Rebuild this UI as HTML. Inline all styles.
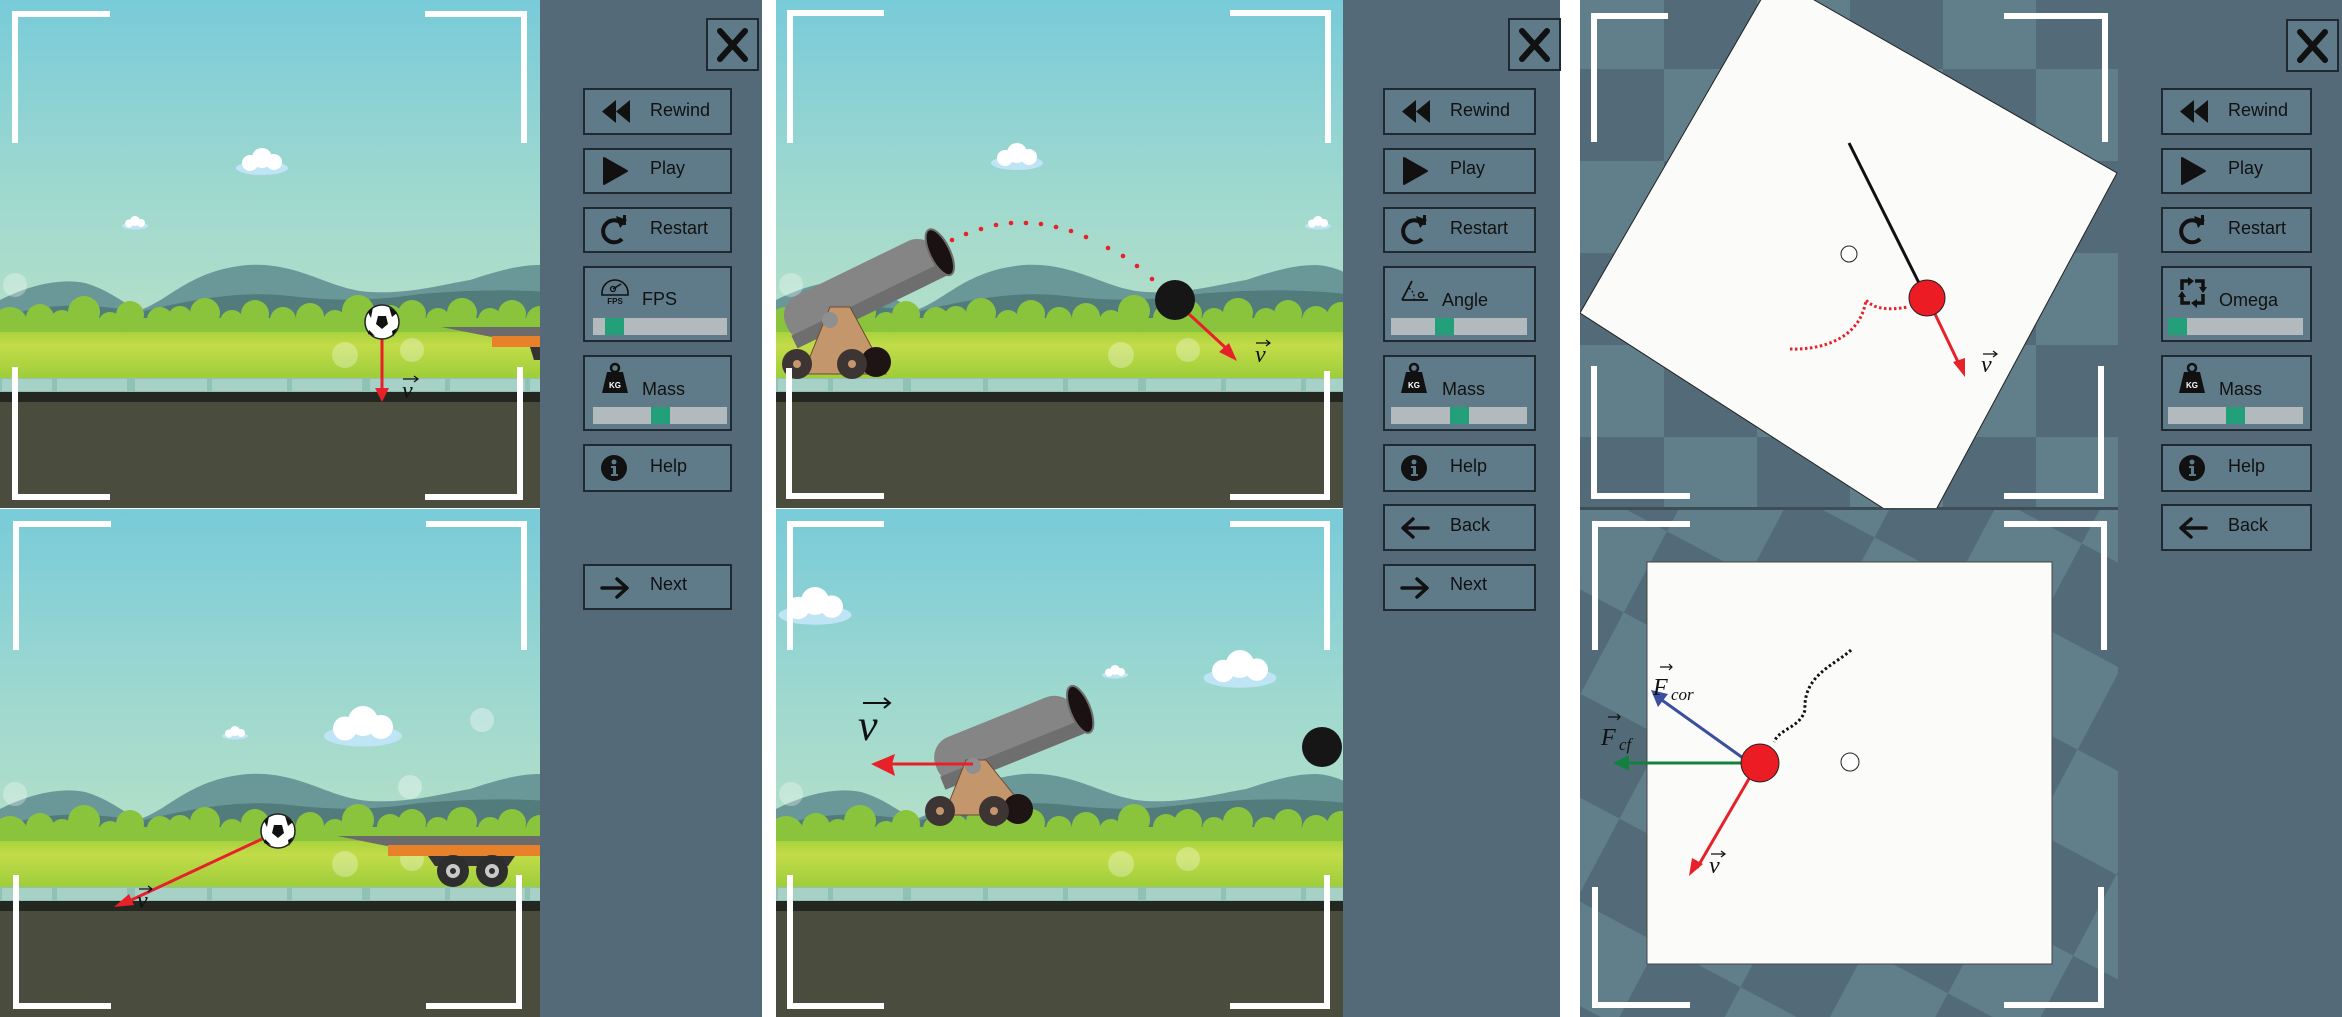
<!DOCTYPE html>
<html><head><meta charset="utf-8"><style>
html,body{margin:0;padding:0;background:#fff;}
svg{display:block;}
</style></head><body>
<svg width="2342" height="1017" viewBox="0 0 2342 1017" xmlns="http://www.w3.org/2000/svg" font-family="Liberation Sans, sans-serif">
<defs>
<linearGradient id="sky" x1="0" y1="0" x2="0" y2="1">
<stop offset="0" stop-color="#78cbd9"/><stop offset="0.55" stop-color="#9ed8cf"/><stop offset="1" stop-color="#b6e0c8"/>
</linearGradient>
<linearGradient id="grass" x1="0" y1="0" x2="0" y2="1">
<stop offset="0" stop-color="#a9d23d"/><stop offset="0.3" stop-color="#c2dc48"/><stop offset="1" stop-color="#9fcd3b"/>
</linearGradient>
<g id="scene">
<rect x="0" y="0" width="580" height="340" fill="url(#sky)"/>
<path d="M0,300 C30,285 60,278 85,283 C110,290 125,305 140,310 C170,300 190,270 248,265 C300,262 330,290 370,292 C410,294 440,285 470,280 C500,270 520,265 540,265 C560,266 575,275 580,280 L580,340 L0,340 Z" fill="#6a9899"/>
<path d="M0,318 C50,300 100,305 140,312 C190,300 240,290 290,296 C340,302 380,300 420,294 C470,290 520,288 580,295 L580,340 L0,340 Z" fill="#527b7b"/>
<g fill="#8ac43c">
<circle cx="10" cy="325" r="18"/><circle cx="40" cy="318" r="14"/><circle cx="62" cy="322" r="12"/><circle cx="84" cy="312" r="16"/><circle cx="110" cy="324" r="12"/><circle cx="130" cy="315" r="14"/><circle cx="160" cy="320" r="13"/><circle cx="180" cy="318" r="12"/><circle cx="205" cy="313" r="15"/><circle cx="232" cy="322" r="12"/><circle cx="255" cy="314" r="14"/><circle cx="283" cy="320" r="13"/><circle cx="310" cy="317" r="14"/><circle cx="335" cy="322" r="12"/><circle cx="358" cy="311" r="16"/><circle cx="390" cy="318" r="13"/><circle cx="412" cy="314" r="14"/><circle cx="438" cy="320" r="12"/><circle cx="462" cy="313" r="15"/><circle cx="490" cy="320" r="12"/><circle cx="512" cy="314" r="14"/><circle cx="540" cy="320" r="14"/><circle cx="565" cy="316" r="14"/>
<rect x="0" y="318" width="580" height="16"/>
</g>
<rect x="0" y="332" width="580" height="46" fill="url(#grass)"/>
<g fill="#ffffff" opacity="0.3"><circle cx="15" cy="285" r="12"/><circle cx="345" cy="355" r="13"/><circle cx="412" cy="350" r="12"/></g>
<rect x="0" y="378" width="580" height="15" fill="#8fc2b5"/>
<g fill="#a7d1c6"><rect x="2" y="379" width="50" height="12"/><rect x="57" y="379" width="70" height="12"/><rect x="135" y="379" width="72" height="12"/><rect x="212" y="379" width="75" height="12"/><rect x="292" y="379" width="70" height="12"/><rect x="370" y="379" width="75" height="12"/><rect x="450" y="379" width="75" height="12"/><rect x="530" y="379" width="50" height="12"/></g>
<rect x="0" y="392" width="580" height="10" fill="#23271f"/>
<rect x="0" y="402" width="580" height="120" fill="#4a4c3e"/>
</g>
<g id="cloud"><ellipse cx="0" cy="0" rx="26" ry="7" fill="#bfe4f5"/><circle cx="-12" cy="-5" r="8" fill="#fff"/><circle cx="0" cy="-10" r="10" fill="#fff"/><circle cx="12" cy="-6" r="8" fill="#fff"/></g>
<pattern id="chk" x="-10" y="-23" width="186" height="184" patternUnits="userSpaceOnUse">
<rect width="186" height="184" fill="#617e8b"/><rect width="93" height="92" fill="#536b79"/><rect x="93" y="92" width="93" height="92" fill="#536b79"/>
</pattern>
<pattern id="chk2" x="0" y="0" width="186" height="184" patternUnits="userSpaceOnUse" patternTransform="rotate(28 1850 760)">
<rect width="186" height="184" fill="#617e8b"/><rect width="93" height="92" fill="#536b79"/><rect x="93" y="92" width="93" height="92" fill="#536b79"/>
</pattern>
<clipPath id="c1t"><rect x="0" y="0" width="540" height="508"/></clipPath>
<clipPath id="c1b"><rect x="0" y="509" width="540" height="508"/></clipPath>
<clipPath id="c2t"><rect x="776" y="0" width="567" height="508"/></clipPath>
<clipPath id="c2b"><rect x="776" y="509" width="567" height="508"/></clipPath>
<clipPath id="c3t"><rect x="1580" y="0" width="538" height="508"/></clipPath>
<g id="i-rew"><path d="M15,0 L1,11.5 L15,23 Z M29,0 L15,11.5 L29,23 Z" fill="#111"/></g>
<g id="i-play"><path d="M1,0 L24,13 L1,26 Z" fill="#111" stroke="#111" stroke-width="2" stroke-linejoin="round"/></g>
<g id="i-rst"><path d="M20,5 A11,11 0 1 0 22,22" fill="none" stroke="#111" stroke-width="4"/><path d="M16,-1 L27,3 L20,11 Z M23,-2 L26,-2 L26,8 L23,8 Z" fill="#111"/></g>
<g id="i-help"><circle cx="13" cy="13" r="13" fill="#111"/><circle cx="13" cy="7" r="2.5" fill="#5f7b8a"/><path d="M10,11 L15,11 L15,19 L17,19 L17,21 L10,21 L10,19 L12,19 L12,13 L10,13 Z" fill="#5f7b8a"/></g>
<g id="i-back"><path d="M28,11 L4,11 M13,2 L3,11 L13,20" fill="none" stroke="#111" stroke-width="3.5" stroke-linecap="round" stroke-linejoin="round"/></g>
<g id="i-next"><path d="M2,11 L26,11 M17,2 L27,11 L17,20" fill="none" stroke="#111" stroke-width="3.5" stroke-linecap="round" stroke-linejoin="round"/></g>
<g id="i-mass"><circle cx="14" cy="3" r="4" fill="none" stroke="#111" stroke-width="2.5"/><path d="M6,7 L22,7 L27,28 L1,28 Z" fill="#111"/><text x="14" y="23" font-size="8" font-weight="bold" fill="#fff" text-anchor="middle">KG</text></g>
<g id="i-fps"><path d="M1,18 A13,13 0 0 1 27,18 L27,20 L1,20 Z" fill="none" stroke="#111" stroke-width="1.6"/><path d="M12,14 L20,9" stroke="#111" stroke-width="1.5"/><circle cx="12" cy="14" r="2.5" fill="none" stroke="#111" stroke-width="1.3"/><text x="14" y="29" font-size="8" font-weight="bold" fill="#111" text-anchor="middle">FPS</text></g>
<g id="i-angle"><path d="M2,25 L28,25 M2,25 L12,6" fill="none" stroke="#111" stroke-width="1.8"/><path d="M9,13 A12,12 0 0 1 14,25" fill="none" stroke="#111" stroke-width="1.3" stroke-dasharray="2 2"/><circle cx="21" cy="20" r="2.5" fill="none" stroke="#111" stroke-width="1.5"/></g>
<g id="i-omega"><path d="M4,12 L4,3 L13,3 M17,3 L25,3 L25,11 M25,16 L25,25 L16,25 M12,25 L4,25 L4,17" fill="none" stroke="#111" stroke-width="3.5"/><path d="M10,-1 L16,3 L10,8Z M29,9 L25,15 L21,9Z M19,21 L13,25 L19,30Z M0,19 L4,13 L8,19Z" fill="#111"/></g>
<g id="xbtn"><rect x="0" y="0" width="51" height="51" fill="#5f7b8a" stroke="#1f2a30" stroke-width="2"/><path d="M13,12 L38,40 M38,12 L13,40" stroke="#111" stroke-width="6" stroke-linecap="round"/></g>
</defs>

<rect width="2342" height="1017" fill="#fff"/>

<!-- PANEL 1 -->
<g clip-path="url(#c1t)"><use href="#scene"/>
<use href="#cloud" transform="translate(262,168)"/><use href="#cloud" transform="translate(135,226) scale(0.5)"/>
<path d="M441,327 L540,327 L540,337 L492,337 Z" fill="#6b6b6b"/><rect x="492" y="336" width="50" height="11" fill="#e8822a"/><path d="M530,347 L540,347 L540,360 L534,360Z" fill="#333"/>
<line x1="382" y1="339" x2="382" y2="392" stroke="#e8202a" stroke-width="3"/><path d="M375,388 L389,388 L382,402 Z" fill="#e8202a"/>
<circle cx="382" cy="322" r="17" fill="#fff" stroke="#222" stroke-width="1.5"/><path d="M378,316 L386,316 L388,324 L382,329 L376,324Z" fill="#111"/><path d="M389,307 L397,313 L392,317Z M368,312 L373,307 L371,318Z M369,330 L375,336 L368,334Z M392,331 L397,328 L393,337Z" fill="#111"/>
<text x="402" y="398" font-family="Liberation Serif, serif" font-style="italic" font-size="24" fill="#111">v</text><path d="M403,379 L418,379 M414,376 L418,379 L414,382" stroke="#111" stroke-width="1.2" fill="none"/>
</g>
<g clip-path="url(#c1b)"><use href="#scene" y="509"/>
<use href="#cloud" transform="translate(363,736) scale(1.5)"/><use href="#cloud" transform="translate(235,736) scale(0.5)"/>
<g fill="#fff" opacity="0.35"><circle cx="482" cy="720" r="12"/><circle cx="410" cy="787" r="12"/></g>
<path d="M337,836 L540,836 L540,846 L387,846 Z" fill="#6b6b6b"/><rect x="388" y="845" width="152" height="11" fill="#e8822a"/>
<path d="M428,856 L515,856 L508,866 L435,866 Z" fill="#333"/>
<circle cx="453" cy="871" r="16" fill="#2e2e2e"/><circle cx="453" cy="871" r="7" fill="#c9c9c9"/><circle cx="453" cy="871" r="3" fill="#2e2e2e"/>
<circle cx="492" cy="871" r="16" fill="#2e2e2e"/><circle cx="492" cy="871" r="7" fill="#c9c9c9"/><circle cx="492" cy="871" r="3" fill="#2e2e2e"/>
<line x1="262" y1="839" x2="127" y2="902" stroke="#e8202a" stroke-width="3"/><path d="M114,907 L129,894 L134,905 Z" fill="#e8202a"/>
<circle cx="278" cy="831" r="17" fill="#fff" stroke="#222" stroke-width="1.5"/><path d="M274,825 L282,825 L284,833 L278,838 L272,833Z" fill="#111"/><path d="M285,816 L293,822 L288,826Z M264,821 L269,816 L267,827Z M265,839 L271,845 L264,843Z M288,840 L293,837 L289,846Z" fill="#111"/>
<text x="137" y="908" font-family="Liberation Serif, serif" font-style="italic" font-size="24" fill="#111">v</text><path d="M139,889 L152,889 M148,886 L152,889 L148,892" stroke="#111" stroke-width="1.2" fill="none"/>
</g>
<g fill="none" stroke="#fff" stroke-width="6">
<path d="M110,14 L15,14 L15,143"/><path d="M425,14 L524,14 L524,143"/><path d="M15,367 L15,497 L110,497"/><path d="M520,367 L520,497 L425,497"/>
<path d="M111,524 L16,524 L16,650"/><path d="M426,524 L524,524 L524,650"/><path d="M16,875 L16,1006 L111,1006"/><path d="M519,875 L519,1006 L426,1006"/>
</g>

<rect x="540" y="0" width="222" height="1017" fill="#546a78"/>
<use href="#xbtn" x="707" y="19"/>
<g transform="translate(584,89)"><rect width="147" height="45" fill="#5f7b8a" stroke="#1f2a30" stroke-width="2"/><use href="#i-rew" x="17" y="11"/><text x="66" y="27" font-size="18" fill="#111">Rewind</text></g>
<g transform="translate(584,149)"><rect width="147" height="44" fill="#5f7b8a" stroke="#1f2a30" stroke-width="2"/><use href="#i-play" x="19" y="9"/><text x="66" y="25" font-size="18" fill="#111">Play</text></g>
<g transform="translate(584,208)"><rect width="147" height="44" fill="#5f7b8a" stroke="#1f2a30" stroke-width="2"/><use href="#i-rst" x="16" y="9"/><text x="66" y="26" font-size="18" fill="#111">Restart</text></g>
<g transform="translate(584,267)"><rect width="147" height="74" fill="#5f7b8a" stroke="#1f2a30" stroke-width="2"/><use href="#i-fps" x="17" y="8"/><text x="58" y="38" font-size="18" fill="#111">FPS</text><rect x="9" y="51" width="134" height="17" fill="#b3babd"/><rect x="21" y="51" width="19" height="17" fill="#23a07a"/></g>
<g transform="translate(584,356)"><rect width="147" height="74" fill="#5f7b8a" stroke="#1f2a30" stroke-width="2"/><use href="#i-mass" x="17" y="9"/><text x="58" y="39" font-size="18" fill="#111">Mass</text><rect x="9" y="51" width="134" height="17" fill="#b3babd"/><rect x="67" y="51" width="19" height="17" fill="#23a07a"/></g>
<g transform="translate(584,445)"><rect width="147" height="46" fill="#5f7b8a" stroke="#1f2a30" stroke-width="2"/><use href="#i-help" x="17" y="10"/><text x="66" y="27" font-size="18" fill="#111">Help</text></g>
<g transform="translate(584,565)"><rect width="147" height="44" fill="#5f7b8a" stroke="#1f2a30" stroke-width="2"/><use href="#i-next" x="16" y="12"/><text x="66" y="25" font-size="18" fill="#111">Next</text></g>

<!-- PANEL 2 -->
<g clip-path="url(#c2t)"><use href="#scene" x="776"/>
<use href="#cloud" transform="translate(1017,163)"/><use href="#cloud" transform="translate(1318,226) scale(0.5)"/>
<g fill="#e8202a"><circle cx="952" cy="240" r="2.3"/><circle cx="966" cy="234" r="2.3"/><circle cx="981" cy="229" r="2.3"/><circle cx="996" cy="225" r="2.3"/><circle cx="1011" cy="223" r="2.3"/><circle cx="1026" cy="223" r="2.3"/><circle cx="1041" cy="224" r="2.3"/><circle cx="1056" cy="227" r="2.3"/><circle cx="1071" cy="231" r="2.3"/><circle cx="1086" cy="237" r="2.3"/><circle cx="1108" cy="248" r="2.3"/><circle cx="1123" cy="256" r="2.3"/><circle cx="1137" cy="266" r="2.3"/><circle cx="1152" cy="279" r="2.3"/></g>
<g transform="translate(805,318) rotate(-26)"><rect x="-20" y="-24" width="168" height="48" rx="22" fill="#858585"/><rect x="-20" y="10" width="168" height="14" fill="#6e6e6e"/><ellipse cx="150" cy="0" rx="10" ry="25" fill="#1a1212" stroke="#6e6e6e" stroke-width="2"/></g>
<path d="M803,374 L830,307 L850,307 L886,374 Z" fill="#c4966c" stroke="#6b4b32" stroke-width="1"/>
<circle cx="830" cy="320" r="8" fill="#8f8f8f"/>
<circle cx="876" cy="362" r="15" fill="#1e1414"/><circle cx="797" cy="364" r="15" fill="#3d3533"/><circle cx="797" cy="364" r="4" fill="#c4966c"/><circle cx="852" cy="364" r="15" fill="#3d3533"/><circle cx="852" cy="364" r="4" fill="#c4966c"/>
<circle cx="1175" cy="300" r="20" fill="#161616"/>
<line x1="1189" y1="314" x2="1228" y2="350" stroke="#e8202a" stroke-width="3"/><path d="M1237,361 L1219,352 L1229,343 Z" fill="#e8202a"/>
<text x="1255" y="362" font-family="Liberation Serif, serif" font-style="italic" font-size="24" fill="#111">v</text><path d="M1256,343 L1270,343 M1266,340 L1270,343 L1266,346" stroke="#111" stroke-width="1.2" fill="none"/>
</g>
<g clip-path="url(#c2b)"><use href="#scene" x="776" y="509"/>
<use href="#cloud" transform="translate(815,615) scale(1.4)"/><use href="#cloud" transform="translate(1240,678) scale(1.4)"/><use href="#cloud" transform="translate(1115,675) scale(0.5)"/>
<g transform="translate(955,760) rotate(-22)"><rect x="-20" y="-24" width="150" height="48" rx="22" fill="#858585"/><rect x="-20" y="10" width="150" height="14" fill="#6e6e6e"/><ellipse cx="135" cy="0" rx="10" ry="25" fill="#1a1212" stroke="#6e6e6e" stroke-width="2"/></g>
<path d="M944,815 L966,760 L986,760 L1030,815 Z" fill="#c4966c" stroke="#6b4b32" stroke-width="1"/>
<circle cx="973" cy="766" r="8" fill="#8f8f8f"/>
<circle cx="1018" cy="809" r="15" fill="#1e1414"/><circle cx="940" cy="811" r="15" fill="#3d3533"/><circle cx="940" cy="811" r="4" fill="#c4966c"/><circle cx="994" cy="811" r="15" fill="#3d3533"/><circle cx="994" cy="811" r="4" fill="#c4966c"/>
<line x1="973" y1="764" x2="890" y2="764" stroke="#e8202a" stroke-width="3"/><path d="M871,764 L895,754 L892,764 L895,776 Z" fill="#e8202a"/>
<text x="858" y="740" font-family="Liberation Serif, serif" font-style="italic" font-size="44" fill="#111">v</text><path d="M863,703 L890,703 M884,698 L890,703 L884,708" stroke="#111" stroke-width="2" fill="none"/>
<circle cx="1322" cy="747" r="20" fill="#161616"/>
</g>
<g fill="none" stroke="#fff" stroke-width="6">
<path d="M884,13 L790,13 L790,143"/><path d="M1230,13 L1328,13 L1328,143"/><path d="M789,368 L789,496 L884,496"/><path d="M1327,371 L1327,497 L1230,497"/>
<path d="M884,524 L790,524 L790,650"/><path d="M1230,524 L1327,524 L1327,650"/><path d="M790,875 L790,1006 L884,1006"/><path d="M1327,875 L1327,1006 L1230,1006"/>
</g>

<rect x="1343" y="0" width="217" height="1017" fill="#546a78"/>
<use href="#xbtn" x="1509" y="19"/>
<g transform="translate(1384,89)"><rect width="151" height="45" fill="#5f7b8a" stroke="#1f2a30" stroke-width="2"/><use href="#i-rew" x="17" y="11"/><text x="66" y="27" font-size="18" fill="#111">Rewind</text></g>
<g transform="translate(1384,149)"><rect width="151" height="44" fill="#5f7b8a" stroke="#1f2a30" stroke-width="2"/><use href="#i-play" x="19" y="9"/><text x="66" y="25" font-size="18" fill="#111">Play</text></g>
<g transform="translate(1384,208)"><rect width="151" height="44" fill="#5f7b8a" stroke="#1f2a30" stroke-width="2"/><use href="#i-rst" x="16" y="9"/><text x="66" y="26" font-size="18" fill="#111">Restart</text></g>
<g transform="translate(1384,267)"><rect width="151" height="74" fill="#5f7b8a" stroke="#1f2a30" stroke-width="2"/><use href="#i-angle" x="16" y="8"/><text x="58" y="39" font-size="18" fill="#111">Angle</text><rect x="7" y="51" width="136" height="17" fill="#b3babd"/><rect x="51" y="51" width="19" height="17" fill="#23a07a"/></g>
<g transform="translate(1384,356)"><rect width="151" height="74" fill="#5f7b8a" stroke="#1f2a30" stroke-width="2"/><use href="#i-mass" x="16" y="9"/><text x="58" y="39" font-size="18" fill="#111">Mass</text><rect x="7" y="51" width="136" height="17" fill="#b3babd"/><rect x="66" y="51" width="19" height="17" fill="#23a07a"/></g>
<g transform="translate(1384,445)"><rect width="151" height="46" fill="#5f7b8a" stroke="#1f2a30" stroke-width="2"/><use href="#i-help" x="17" y="10"/><text x="66" y="27" font-size="18" fill="#111">Help</text></g>
<g transform="translate(1384,505)"><rect width="151" height="45" fill="#5f7b8a" stroke="#1f2a30" stroke-width="2"/><use href="#i-back" x="16" y="12"/><text x="66" y="26" font-size="18" fill="#111">Back</text></g>
<g transform="translate(1384,565)"><rect width="151" height="45" fill="#5f7b8a" stroke="#1f2a30" stroke-width="2"/><use href="#i-next" x="16" y="12"/><text x="66" y="25" font-size="18" fill="#111">Next</text></g>

<!-- PANEL 3 -->
<rect x="1580" y="0" width="538" height="508" fill="url(#chk)"/>
<rect x="1580" y="509" width="538" height="508" fill="url(#chk2)"/>
<rect x="1580" y="507" width="538" height="3" fill="#3d4e57"/>
<g clip-path="url(#c3t)">
<path d="M1774,-23 L2117,173 L1923,534 L1580,313 Z" fill="#fbfbf9" stroke="#222" stroke-width="1"/>
<line x1="1849" y1="143" x2="1920" y2="285" stroke="#111" stroke-width="3"/>
<circle cx="1849" cy="254" r="8" fill="#fff" stroke="#222" stroke-width="1"/>
<path d="M1790,349 C1820,350 1860,340 1866,300 C1875,310 1890,310 1908,307" fill="none" stroke="#e8202a" stroke-width="3" stroke-dasharray="2.5 2.5"/>
<line x1="1935" y1="314" x2="1959" y2="364" stroke="#e8202a" stroke-width="3"/><path d="M1965,377 L1953,362 L1965,358 Z" fill="#e8202a"/>
<circle cx="1927" cy="298" r="18" fill="#ec1c24" stroke="#222" stroke-width="1"/>
<text x="1981" y="372" font-family="Liberation Serif, serif" font-style="italic" font-size="24" fill="#111">v</text><path d="M1983,354 L1997,354 M1993,351 L1997,354 L1993,357" stroke="#111" stroke-width="1.2" fill="none"/>
</g>
<rect x="1647" y="562" width="405" height="402" fill="#fbfbf9" stroke="#444" stroke-width="1"/>
<path d="M1851,650 C1835,665 1803,675 1805,710 C1800,728 1780,728 1774,742" fill="none" stroke="#111" stroke-width="3" stroke-dasharray="2.5 2.5"/>
<line x1="1743" y1="758" x2="1659" y2="698" stroke="#3a4fa0" stroke-width="3"/><path d="M1651,690 L1668,694 L1658,707 Z" fill="#3a4fa0"/>
<line x1="1742" y1="763" x2="1625" y2="763" stroke="#138040" stroke-width="3"/><path d="M1613,763 L1629,755 L1629,771 Z" fill="#138040"/>
<line x1="1750" y1="777" x2="1697" y2="868" stroke="#e8202a" stroke-width="3"/><path d="M1689,876 L1692,858 L1703,864 Z" fill="#e8202a"/>
<circle cx="1760" cy="763" r="19" fill="#ec1c24" stroke="#222" stroke-width="1"/>
<circle cx="1850" cy="762" r="9" fill="#fff" stroke="#222" stroke-width="1"/>
<text x="1653" y="695" font-family="Liberation Serif, serif" font-style="italic" font-size="24" fill="#111">F</text><path d="M1660,667 L1672,667 M1669,664 L1672,667 L1669,670" stroke="#111" stroke-width="1.2" fill="none"/><text x="1671" y="700" font-family="Liberation Serif, serif" font-style="italic" font-size="17" fill="#111">cor</text>
<text x="1601" y="745" font-family="Liberation Serif, serif" font-style="italic" font-size="24" fill="#111">F</text><path d="M1608,717 L1620,717 M1617,714 L1620,717 L1617,720" stroke="#111" stroke-width="1.2" fill="none"/><text x="1619" y="750" font-family="Liberation Serif, serif" font-style="italic" font-size="17" fill="#111">cf</text>
<text x="1709" y="873" font-family="Liberation Serif, serif" font-style="italic" font-size="24" fill="#111">v</text><path d="M1711,854 L1725,854 M1721,851 L1725,854 L1721,857" stroke="#111" stroke-width="1.2" fill="none"/>
<g fill="none" stroke="#fff" stroke-width="6">
<path d="M1668,16 L1594,16 L1594,142"/><path d="M2004,16 L2105,16 L2105,142"/><path d="M1594,366 L1594,496 L1690,496"/><path d="M2101,366 L2101,496 L2004,496"/>
<path d="M1690,524 L1595,524 L1595,650"/><path d="M2004,524 L2104,524 L2104,650"/><path d="M1595,887 L1595,1005 L1690,1005"/><path d="M2101,887 L2101,1005 L2004,1005"/>
</g>

<rect x="2118" y="0" width="224" height="1017" fill="#546a78"/>
<use href="#xbtn" x="2287" y="20"/>
<g transform="translate(2162,89)"><rect width="149" height="45" fill="#5f7b8a" stroke="#1f2a30" stroke-width="2"/><use href="#i-rew" x="17" y="11"/><text x="66" y="27" font-size="18" fill="#111">Rewind</text></g>
<g transform="translate(2162,149)"><rect width="149" height="44" fill="#5f7b8a" stroke="#1f2a30" stroke-width="2"/><use href="#i-play" x="19" y="9"/><text x="66" y="25" font-size="18" fill="#111">Play</text></g>
<g transform="translate(2162,208)"><rect width="149" height="44" fill="#5f7b8a" stroke="#1f2a30" stroke-width="2"/><use href="#i-rst" x="16" y="9"/><text x="66" y="26" font-size="18" fill="#111">Restart</text></g>
<g transform="translate(2162,267)"><rect width="149" height="74" fill="#5f7b8a" stroke="#1f2a30" stroke-width="2"/><use href="#i-omega" x="16" y="11"/><text x="57" y="39" font-size="18" fill="#111">Omega</text><rect x="6" y="51" width="135" height="17" fill="#b3babd"/><rect x="6" y="51" width="19" height="17" fill="#23a07a"/></g>
<g transform="translate(2162,356)"><rect width="149" height="74" fill="#5f7b8a" stroke="#1f2a30" stroke-width="2"/><use href="#i-mass" x="16" y="9"/><text x="57" y="39" font-size="18" fill="#111">Mass</text><rect x="6" y="51" width="135" height="17" fill="#b3babd"/><rect x="64" y="51" width="19" height="17" fill="#23a07a"/></g>
<g transform="translate(2162,445)"><rect width="149" height="46" fill="#5f7b8a" stroke="#1f2a30" stroke-width="2"/><use href="#i-help" x="17" y="10"/><text x="66" y="27" font-size="18" fill="#111">Help</text></g>
<g transform="translate(2162,505)"><rect width="149" height="45" fill="#5f7b8a" stroke="#1f2a30" stroke-width="2"/><use href="#i-back" x="16" y="12"/><text x="66" y="26" font-size="18" fill="#111">Back</text></g>
</svg>
</body></html>
